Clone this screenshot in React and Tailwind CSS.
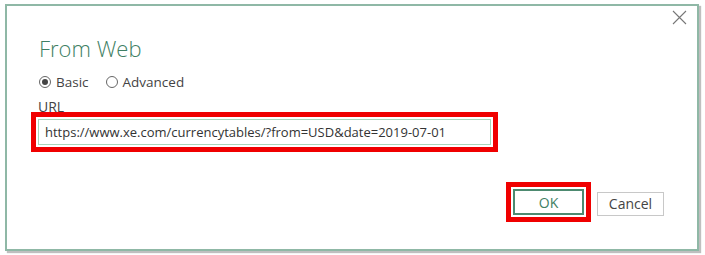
const FONT = { fontFamily: '"Segoe UI", "Open Sans", "Noto Sans", sans-serif' };

function Radio({ checked, label }) {
  return (
    <label className="flex items-center gap-[5px] text-[13.5px] text-[#444]">
      <span className="w-[12px] h-[12px] rounded-full border border-[#666] flex items-center justify-center">
        {checked && <span className="w-[6px] h-[6px] rounded-full bg-[#444]" />}
      </span>
      {label}
    </label>
  );
}

export default function App() {
  return (
    <div className="w-[705px] h-[255px] bg-white pt-[4px] pl-[5px]" style={FONT}>
      <div className="w-[694px] h-[247px] border-2 border-[#8fb8a6] shadow-[2px_2px_1px_rgba(0,0,0,0.25)] bg-white flex flex-col pl-[24px] pr-[33px]">
        <div className="flex justify-end h-[26px] pt-[4px] -mr-[23px]">
          <svg width="15" height="15" viewBox="0 0 15 15" className="text-[#777]">
            <path d="M1 1L14 14M14 1L1 14" stroke="currentColor" strokeWidth="1.1" fill="none" />
          </svg>
        </div>
        <h1 className="ml-[8px] mt-[1px] text-[22px] leading-[30px] font-light text-[#3f7f64]">From Web</h1>
        <div className="ml-[8px] mt-[9px] flex items-center gap-[17px]">
          <Radio checked label="Basic" />
          <Radio label="Advanced" />
        </div>
        <div className="ml-[7px] mt-[6px] text-[14px] leading-[18px] text-[#444]">URL</div>
        <div className="relative -mt-[4px] w-[467px] h-[40px] border-[5px] border-[#f00000] p-[2px] bg-white">
          <div className="h-full border border-[#a9d5bb] flex items-center px-[6px] text-[13px] text-[#333] whitespace-nowrap">
            https://www.xe.com/currencytables/?from=USD&amp;date=2019-07-01
          </div>
        </div>
        <div className="mt-[30px] flex justify-end items-center gap-[6px]">
          <div className="w-[85px] h-[40px] border-[5px] border-[#f00000] p-[2px]">
            <button className="w-full h-full border-2 border-[#4d8a70] text-[14px] text-[#3f7f64] bg-white">OK</button>
          </div>
          <button className="w-[67px] h-[24px] border border-[#c8c8c8] text-[14px] text-[#444] bg-white mt-[3px]">Cancel</button>
        </div>
      </div>
    </div>
  );
}
